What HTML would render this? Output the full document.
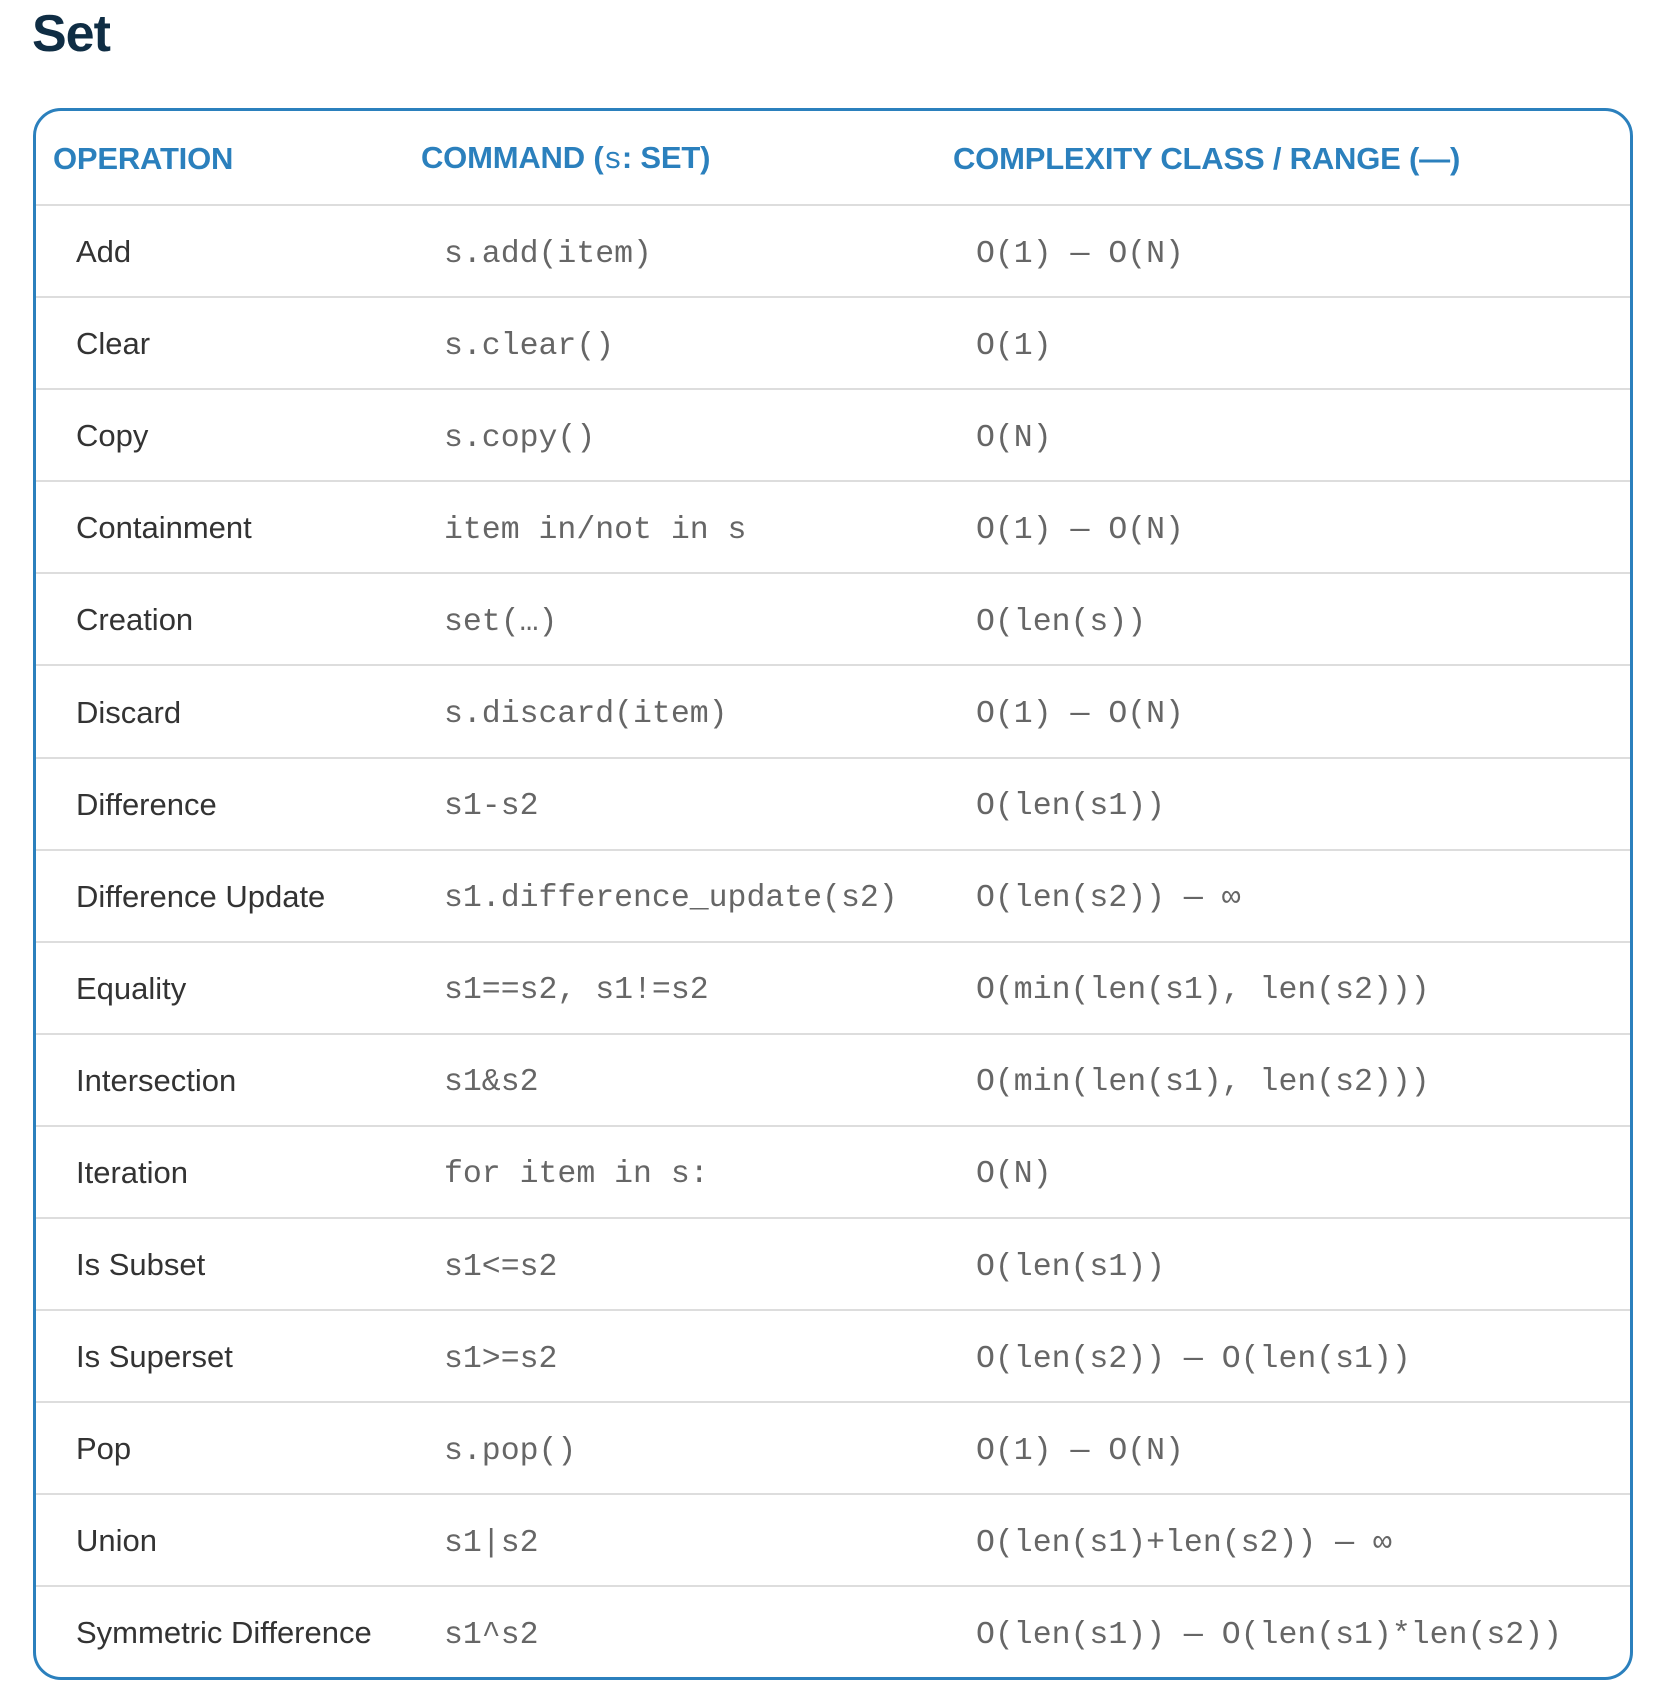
<!DOCTYPE html>
<html><head><meta charset="utf-8"><style>
html,body{margin:0;padding:0;background:#fff;width:1656px;height:1704px;overflow:hidden}
h1{position:absolute;left:32px;top:4px;margin:0;font:bold 52px "Liberation Sans",sans-serif;color:#0f2d44;letter-spacing:-1px}
.box{position:absolute;left:33px;top:108px;width:1594px;height:1566px;border:3px solid #2b80bd;border-radius:28px;overflow:hidden}
.hd{height:93px;border-bottom:2px solid #ddd;display:flex;align-items:center;font:bold 31px "Liberation Sans",sans-serif;color:#2b80bd;letter-spacing:-0.2px}
.row{height:90.1px;border-bottom:2px solid #ddd;display:flex;align-items:center}
.row:last-child{border-bottom:none}
.row span{padding-top:6px}
.row span.c1{padding-top:2px}
.hd span{padding-top:2px}
.c1{position:absolute;left:40px}
.hd .c1{left:17px}.hd .c2{left:385px}.hd .c3{left:917px}
.row,.hd{position:relative}
.c2{position:absolute;left:408px}.c3{position:absolute;left:940px}
.row .c1{font:31px "Liberation Sans",sans-serif;color:#333}
.row .c2,.row .c3{font:31.5px "Liberation Mono",monospace;color:#666}
.m{font-family:"Liberation Mono",monospace;font-weight:normal}
</style></head><body>
<h1>Set</h1>
<div class="box">
<div class="hd"><span class="c1">OPERATION</span><span class="c2">COMMAND (<span class="m">s</span>: SET)</span><span class="c3">COMPLEXITY CLASS / RANGE (—)</span></div>
<div class="row"><span class="c1">Add</span><span class="c2">s.add(item)</span><span class="c3">O(1) — O(N)</span></div>
<div class="row"><span class="c1">Clear</span><span class="c2">s.clear()</span><span class="c3">O(1)</span></div>
<div class="row"><span class="c1">Copy</span><span class="c2">s.copy()</span><span class="c3">O(N)</span></div>
<div class="row"><span class="c1">Containment</span><span class="c2">item in/not in s</span><span class="c3">O(1) — O(N)</span></div>
<div class="row"><span class="c1">Creation</span><span class="c2">set(…)</span><span class="c3">O(len(s))</span></div>
<div class="row"><span class="c1">Discard</span><span class="c2">s.discard(item)</span><span class="c3">O(1) — O(N)</span></div>
<div class="row"><span class="c1">Difference</span><span class="c2">s1-s2</span><span class="c3">O(len(s1))</span></div>
<div class="row"><span class="c1">Difference Update</span><span class="c2">s1.difference_update(s2)</span><span class="c3">O(len(s2)) — ∞</span></div>
<div class="row"><span class="c1">Equality</span><span class="c2">s1==s2, s1!=s2</span><span class="c3">O(min(len(s1), len(s2)))</span></div>
<div class="row"><span class="c1">Intersection</span><span class="c2">s1&amp;s2</span><span class="c3">O(min(len(s1), len(s2)))</span></div>
<div class="row"><span class="c1">Iteration</span><span class="c2">for item in s:</span><span class="c3">O(N)</span></div>
<div class="row"><span class="c1">Is Subset</span><span class="c2">s1&lt;=s2</span><span class="c3">O(len(s1))</span></div>
<div class="row"><span class="c1">Is Superset</span><span class="c2">s1&gt;=s2</span><span class="c3">O(len(s2)) — O(len(s1))</span></div>
<div class="row"><span class="c1">Pop</span><span class="c2">s.pop()</span><span class="c3">O(1) — O(N)</span></div>
<div class="row"><span class="c1">Union</span><span class="c2">s1|s2</span><span class="c3">O(len(s1)+len(s2)) — ∞</span></div>
<div class="row"><span class="c1">Symmetric Difference</span><span class="c2">s1^s2</span><span class="c3">O(len(s1)) — O(len(s1)*len(s2))</span></div>
</div>
</body></html>
